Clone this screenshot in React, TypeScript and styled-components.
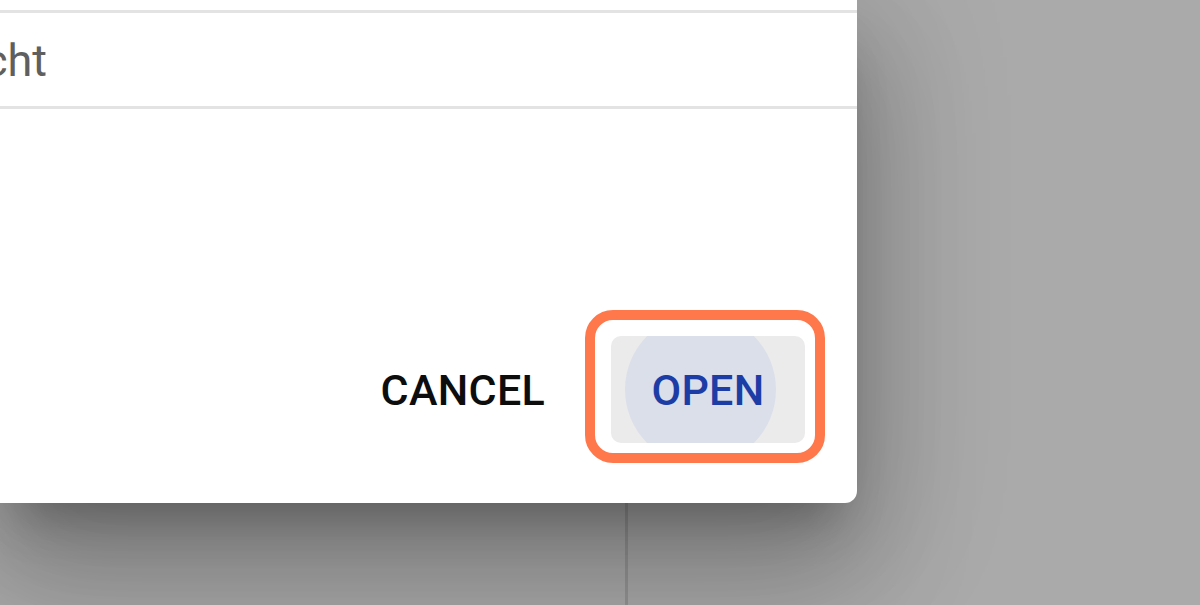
import React from "react";
import styled, { createGlobalStyle } from "styled-components";

const Global = createGlobalStyle`
  html, body { margin: 0; padding: 0; width: 100%; height: 100%; overflow: hidden; background: #ffffff; }
  #root { width: 100%; height: 100%; }
  * { box-sizing: border-box; }
`;

const Page = styled.div`
  position: relative;
  width: 1200px;
  height: 605px;
  display: flex;
  overflow: hidden;
  font-family: Roboto, "Noto Sans", Arial, sans-serif;
`;

const LeftPane = styled.div`
  width: 628px;
  height: 100%;
  border-right: 3px solid rgba(0, 0, 0, 0.12);
  background: #ffffff;
`;

const RightPane = styled.div`
  flex: 1;
  background: #ffffff;
`;

const Backdrop = styled.div`
  position: absolute;
  inset: 0;
  background: rgba(0, 0, 0, 0.335);
`;

const Dialog = styled.div`
  position: absolute;
  top: 0;
  left: 0;
  width: 857px;
  height: 503px;
  background: #ffffff;
  border-radius: 0 0 12px 0;
  overflow: hidden;
  display: flex;
  flex-direction: column;
  box-shadow:
    0 33px 45px -21px rgba(0, 0, 0, 0.26),
    0 72px 114px 9px rgba(0, 0, 0, 0.18),
    0 27px 138px 24px rgba(0, 0, 0, 0.15);
`;

const TopGap = styled.div`
  height: 10px;
`;

const Divider = styled.div`
  height: 3px;
  background: #e3e3e3;
`;

const ListRow = styled.div`
  height: 93px;
  display: flex;
  align-items: center;
  padding-top: 2px;
`;

const RowLabel = styled.span`
  margin-left: -16px;
  font-size: 45px;
  line-height: 1;
  font-weight: 400;
  color: #5f5f5f;
`;

const Spacer = styled.div`
  flex: 1;
`;

const Actions = styled.div`
  display: flex;
  justify-content: flex-end;
  align-items: center;
  gap: 42px;
  padding: 0 52px 60px 0;
`;

const TextButton = styled.button<{ $primary?: boolean }>`
  position: relative;
  height: 107px;
  padding: 0 ${(p) => (p.$primary ? "0" : "24px")};
  width: ${(p) => (p.$primary ? "194px" : "auto")};
  display: flex;
  align-items: center;
  justify-content: center;
  border: none;
  border-radius: 10px;
  background: ${(p) => (p.$primary ? "#ebebeb" : "transparent")};
  color: ${(p) => (p.$primary ? "#1d3da6" : "#0d0d0d")};
  font-family: Roboto, "Noto Sans", Arial, sans-serif;
  font-size: 43px;
  font-weight: 500;
  letter-spacing: 0.3px;
  cursor: pointer;
`;

const Clip = styled.span`
  position: absolute;
  inset: 0;
  border-radius: 10px;
  overflow: hidden;
`;

const Ripple = styled.span`
  position: absolute;
  left: 14px;
  top: -22px;
  width: 151px;
  height: 151px;
  border-radius: 50%;
  background: #dadfea;
`;

const Label = styled.span`
  position: relative;
`;

const Highlight = styled.span`
  position: absolute;
  top: -26px;
  left: -26px;
  right: -20px;
  bottom: -20px;
  border: 10px solid #ff784c;
  border-radius: 28px;
  pointer-events: none;
`;

export default function App() {
  return (
    <>
      <Global />
      <Page>
        <LeftPane />
        <RightPane />
        <Backdrop />
        <Dialog>
          <TopGap />
          <Divider />
          <ListRow>
            <RowLabel>cht</RowLabel>
          </ListRow>
          <Divider />
          <Spacer />
          <Actions>
            <TextButton>CANCEL</TextButton>
            <TextButton $primary>
              <Clip>
                <Ripple />
              </Clip>
              <Label>OPEN</Label>
              <Highlight />
            </TextButton>
          </Actions>
        </Dialog>
      </Page>
    </>
  );
}
